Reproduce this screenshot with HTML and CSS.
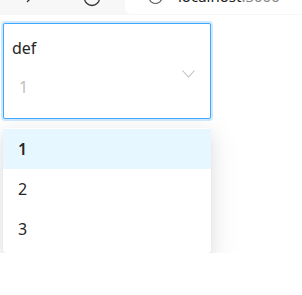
FILE: index.html
```html
<!DOCTYPE html>
<html lang="en">
<head>
  <meta charset="UTF-8" />
  <title>Select</title>
  <link rel="stylesheet" href="styles.css">
</head>
<body>
  <div class="chrome">
    <div class="nav">
      <svg class="nav-back" width="14" height="10" viewBox="0 0 14 10"><path d="M9 -4 L3 2" stroke="#333" stroke-width="1.3" fill="none"/></svg>
      <svg class="nav-reload" width="20" height="10" viewBox="0 0 20 10"><path d="M2.5 -2 A7.5 7.5 0 0 0 17.5 -2" stroke="#333" stroke-width="1.3" fill="none"/></svg>
    </div>
    <div class="address">
      <svg width="16" height="10" viewBox="0 0 16 10"><path d="M2 -3 A6.5 6.5 0 0 0 15 -3" stroke="#555" stroke-width="1.1" fill="none"/></svg>
      <span class="url">localhost<span class="port">:3000</span></span>
    </div>
  </div>
  <div class="page">
    <div class="select">
      <div class="select-label">def</div>
      <div class="select-value">1</div>
      <svg class="select-arrow" width="13" height="8" viewBox="0 0 13 8"><path d="M0.5 0.5 L6.5 7 L12.5 0.5" stroke="#bfbfbf" stroke-width="1.1" fill="none"/></svg>
    </div>
    <ul class="dropdown">
      <li class="option active">1</li>
      <li class="option">2</li>
      <li class="option">3</li>
    </ul>
  </div>
</body>
</html>
```

FILE: styles.css
```css
body {
  margin: 0;
  font-family: 'Segoe UI', 'Noto Sans', 'Open Sans', sans-serif;
  background: #fff;
  color: #262626;
}
.chrome {
  display: flex;
  height: 15px;
  background: #f7f7f7;
  overflow: hidden;
}
.nav {
  width: 125px;
  display: flex;
  align-items: flex-start;
}
.nav-back {
  margin-left: 24px;
}
.nav-reload {
  margin-left: 44px;
}
.address {
  flex: 1;
  background: #fff;
  border-bottom-left-radius: 6px;
  height: 14px;
  display: flex;
  align-items: flex-start;
  padding-left: 22px;
  gap: 15px;
  overflow: hidden;
}
.url {
  font-size: 15px;
  line-height: 15px;
  margin-top: -11px;
  color: #222;
}
.port {
  color: #888;
}
.page {
  padding: 8px 0 0 3px;
  width: 208px;
}
.select {
  position: relative;
  height: 96px;
  border: 1px solid #40a9ff;
  border-radius: 2px;
  box-shadow: 0 0 0 2px rgba(24, 144, 255, 0.2);
  background: #fff;
  box-sizing: border-box;
  padding: 13px 8px 0 8px;
}
.select-label {
  font-size: 16px;
  line-height: 22px;
  color: #262626;
}
.select-value {
  font-size: 16px;
  line-height: 22px;
  color: #bfbfbf;
  margin-top: 17px;
  padding-left: 7px;
}
.select-arrow {
  position: absolute;
  right: 15px;
  top: 46px;
}
.dropdown {
  list-style: none;
  margin: 9px 0 0 0;
  padding: 1px 0 4px 0;
  background: #fff;
  border-radius: 4px;
  box-shadow: 0 3px 6px -4px rgba(0, 0, 0, 0.12), 0 6px 16px 0 rgba(0, 0, 0, 0.08), 0 9px 28px 8px rgba(0, 0, 0, 0.05);
}
.option {
  height: 40px;
  line-height: 40px;
  padding-left: 15px;
  font-size: 16px;
  color: #262626;
}
.option.active {
  background: #e6f7ff;
  font-weight: 600;
}
```
